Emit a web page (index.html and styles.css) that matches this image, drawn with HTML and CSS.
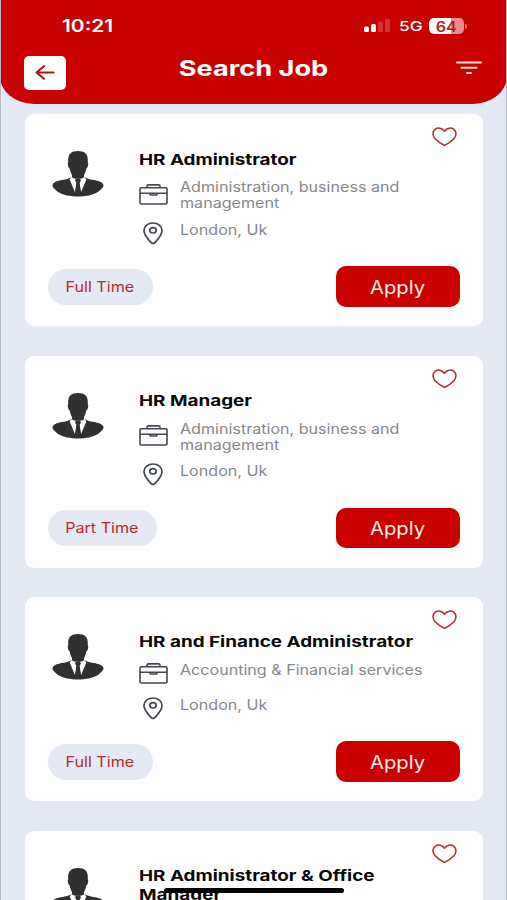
FILE: index.html
```html
<!DOCTYPE html>
<html lang="en">
<head>
<meta charset="utf-8">
<title>Search Job</title>
<link rel="stylesheet" href="styles.css">
</head>
<body>
<svg class="defs" width="0" height="0" aria-hidden="true">
  <symbol id="person" viewBox="0 0 52 46">
    <path fill="#303030" d="M26 0C18.500 0 15.500 4 16.300 11C15.300 11.500 15.700 16.500 17.700 17.500C18.200 20.500 19 22.500 20 24V26L16.500 27.500C11 29.500 2 29 .5 34C0 36 3 38.500 6 41C16 47 36 47 46 41C49 38.500 52 36 51.500 34C50 29 41 29.500 35.500 27.500L32 26V24C33 22.500 33.800 20.500 34.300 17.500C36.300 16.500 36.700 11.500 35.700 11C36.500 4 33.500 0 26 0Z"/>
    <path fill="#fff" d="M19.500 26L17.700 28.500L23.300 42L24.600 31.500L23.200 29L26 27.500L28.800 29L27.400 31.500L28.700 42L34.300 28.500L32.500 26C30 28.500 22 28.500 19.500 26Z"/>
    <path fill="#303030" d="M24 27.500H28L28.800 30L27.500 31.500L29.200 42H22.800L24.500 31.500L23.200 30Z"/>
  </symbol>
  <symbol id="case" viewBox="0 0 29 21">
    <g fill="none" stroke="#434850" stroke-width="1.600" stroke-linejoin="round">
      <rect x="1" y="3.700" width="27" height="16.300" rx="1.200"/>
      <path d="M8 3.500V2.300Q8 .9 9.500 .9H19.500Q21 .9 21 2.300V3.500M1 9.300H28M10.500 9.600L11.500 11H17.500L18.500 9.600"/>
    </g>
  </symbol>
  <symbol id="pin" viewBox="0 0 20 23">
    <g fill="none" stroke="#434850" stroke-width="1.700">
      <path d="M10 21.500C8.500 21.500 1 13.500 1 8.500C1 4 5 1 10 1S19 4 19 8.500C19 13.500 11.500 21.500 10 21.500Z"/>
      <ellipse cx="10" cy="8.300" rx="3.200" ry="2.700"/>
    </g>
  </symbol>
  <symbol id="heart" viewBox="0 0 26 20">
    <path fill="none" stroke="#b92a2e" stroke-width="1.600" stroke-linejoin="round" d="M13 4.200C10.500 .8 6 .2 3.500 2C.3 4.500 .4 8.500 3 11.800C5.500 14.500 9 17 13 19C17 17 20.500 14.500 23 11.800C25.600 8.500 25.700 4.500 22.500 2C20 .2 15.500 .8 13 4.200Z"/>
  </symbol>
</svg>
<div class="screen">
  <header class="header">
    <div class="status">
      <span class="time wide">10:21</span>
      <div class="signals">
        <svg width="26" height="14" viewBox="0 0 26 14"><g fill="#fff"><rect y="7.500" width="5" height="5.500" rx="1.500"/><rect x="7" y="5" width="5" height="8" rx="1.500"/><g opacity=".2"><rect x="14" y="2.500" width="5" height="10.500" rx="1.500"/><rect x="21" width="5" height="13" rx="1.500"/></g></g></svg>
        <span class="network wide">5G</span>
        <span class="battery"><span class="level wide">64</span></span><span class="nub"></span>
      </div>
    </div>
    <div class="bar">
      <button class="back" aria-label="Back"><svg width="20" height="15" viewBox="0 0 20 15" fill="none" stroke="#b01218" stroke-width="2.100" stroke-linecap="round" stroke-linejoin="round"><path d="M18.500 7.500H1.500M9 1.200L1.500 7.500L9 13.800"/></svg></button>
      <h1 class="heading"><span class="wide">Search Job</span></h1>
      <svg class="filter" width="26" height="14" viewBox="0 0 26 14" stroke="#ffdede" stroke-width="2" stroke-linecap="round"><path d="M1 1.500H25M5.500 6.800H20.500M11 12H15"/></svg>
    </div>
  </header>
  <main class="jobs">
    <article class="card">
      <svg class="avatar"><use href="#person"/></svg>
      <div class="details">
        <h2 class="title"><span class="wide">HR Administrator</span></h2>
        <div class="row"><svg class="case"><use href="#case"/></svg><span class="text wide">Administration, business and<br>management</span></div>
        <div class="row place"><svg class="pin"><use href="#pin"/></svg><span class="text wide">London, Uk</span></div>
      </div>
      <svg class="heart"><use href="#heart"/></svg>
      <div class="actions"><span class="tag"><span class="wide">Full Time</span></span><button class="apply"><span class="wide">Apply</span></button></div>
    </article>
    <article class="card">
      <svg class="avatar"><use href="#person"/></svg>
      <div class="details">
        <h2 class="title"><span class="wide">HR Manager</span></h2>
        <div class="row"><svg class="case"><use href="#case"/></svg><span class="text wide">Administration, business and<br>management</span></div>
        <div class="row place"><svg class="pin"><use href="#pin"/></svg><span class="text wide">London, Uk</span></div>
      </div>
      <svg class="heart"><use href="#heart"/></svg>
      <div class="actions"><span class="tag part"><span class="wide">Part Time</span></span><button class="apply"><span class="wide">Apply</span></button></div>
    </article>
    <article class="card">
      <svg class="avatar"><use href="#person"/></svg>
      <div class="details">
        <h2 class="title"><span class="wide">HR and Finance Administrator</span></h2>
        <div class="row"><svg class="case"><use href="#case"/></svg><span class="text wide">Accounting &amp; Financial services</span></div>
        <div class="row place"><svg class="pin"><use href="#pin"/></svg><span class="text wide">London, Uk</span></div>
      </div>
      <svg class="heart"><use href="#heart"/></svg>
      <div class="actions"><span class="tag"><span class="wide">Full Time</span></span><button class="apply"><span class="wide">Apply</span></button></div>
    </article>
    <article class="card">
      <svg class="avatar"><use href="#person"/></svg>
      <div class="details">
        <h2 class="title"><span class="wide">HR Administrator &amp; Office<br>Manager</span></h2>
      </div>
      <svg class="heart"><use href="#heart"/></svg>
    </article>
  </main>
  <div class="home"></div>
</div>
</body>
</html>
```
FILE: styles.css
```css
* { box-sizing: border-box; }
body { margin: 0; font-family: Inter, "Liberation Sans", sans-serif; }
h1, h2 { margin: 0; }
button { border: 0; padding: 0; font-family: inherit; }
svg { display: block; flex: none; }
.defs { position: absolute; }
.screen {
  position: relative;
  height: 900px;
  overflow: hidden;
  background: #e4e9f3;
  border: solid #b3b9c4;
  border-width: 0 1px;
}
.wide {
  display: inline-block;
  white-space: nowrap;
  transform: scaleX(1.15);
  transform-origin: left center;
}
.header {
  height: 104.3px;
  margin: 0 -1px;
  padding: 14px 25px 0 24px;
  background: #c80000;
  border-radius: 0 0 34px 34px / 0 0 28px 28px;
  color: #fff;
}
.status {
  display: flex;
  justify-content: space-between;
  align-items: center;
  height: 24px;
  padding: 0 15px 0 38px;
}
.time { font-size: 17px; font-weight: 600; transform: scaleX(1.23); }
.signals { display: flex; align-items: center; }
.network { width: 30px; margin-left: 9px; font-size: 13.5px; font-weight: 500; transform: scaleX(1.28); }
.battery {
  display: flex;
  align-items: center;
  justify-content: center;
  width: 35px;
  height: 16px;
  border-radius: 5px;
  background: linear-gradient(90deg, #fff 64%, #f08b8b 64%);
  color: #b21a1c;
  font-size: 14px;
  font-weight: 600;
}
.level { transform-origin: center; }
.nub { width: 2px; height: 5px; margin-left: 1px; border-radius: 0 2px 2px 0; background: #ee8080; }
.bar {
  display: grid;
  grid-template-columns: 42px 1fr 42px;
  align-items: center;
  height: 35px;
  margin-top: 17px;
}
.back {
  display: flex;
  align-items: center;
  justify-content: center;
  width: 42px;
  height: 34px;
  border-radius: 5px;
  background: #fff;
}
.heading { font-size: 22px; line-height: 28px; font-weight: 700; text-align: center; margin-top: -10px; }
.heading .wide { transform: scaleX(1.235); transform-origin: center; }
.filter { justify-self: end; margin-top: -10px; }
.jobs { display: flex; flex-direction: column; gap: 29.3px; padding: 10px 23.500px 0; }
.card {
  display: grid;
  grid-template-columns: 87.5px 1fr 26px;
  align-items: start;
  padding: 35.5px 25px 19.500px 27px;
  border-radius: 9px;
  background: #fff;
}
.avatar { width: 52px; height: 46px; margin-top: 1.5px; }
.title { margin-bottom: 10.5px; color: #080808; font-size: 15px; line-height: 19px; font-weight: 700; }
.title .wide { display: block; transform: scaleX(1.258); }
.row { display: flex; align-items: center; min-height: 24.5px; color: #85878b; font-size: 14px; line-height: 16px; }
.row .text { align-self: flex-start; }
.case { width: 29px; height: 21px; margin: -2px 12px 0 -.5px; }
.place { margin-top: 10.5px; }
.pin { width: 20px; height: 23px; margin: -1px 16.500px 0 4px; }
.heart { width: 25px; height: 19.5px; margin: -22.5px 0 0 .7px; }
.actions {
  grid-column: 1 / -1;
  display: flex;
  justify-content: space-between;
  align-items: center;
  margin: 20px -2.500px 0 -4px;
}
.tag {
  display: flex;
  align-items: center;
  justify-content: center;
  width: 105px;
  height: 36px;
  border-radius: 18px;
  background: #e4e9f3;
  color: #b6292f;
  font-size: 14px;
}
.part { width: 109px; }
.tag .wide { transform-origin: center; }
.apply {
  width: 124px;
  height: 40.5px;
  padding-top: 1px;
  border-radius: 10px;
  background: #c80000;
  color: #ffe9e9;
  font-size: 18px;
}
.apply .wide { transform: scaleX(1.12); transform-origin: center; }
.home {
  position: absolute;
  left: 163px;
  top: 887.5px;
  width: 180px;
  height: 5px;
  border-radius: 3px;
  background: #000;
}
```
